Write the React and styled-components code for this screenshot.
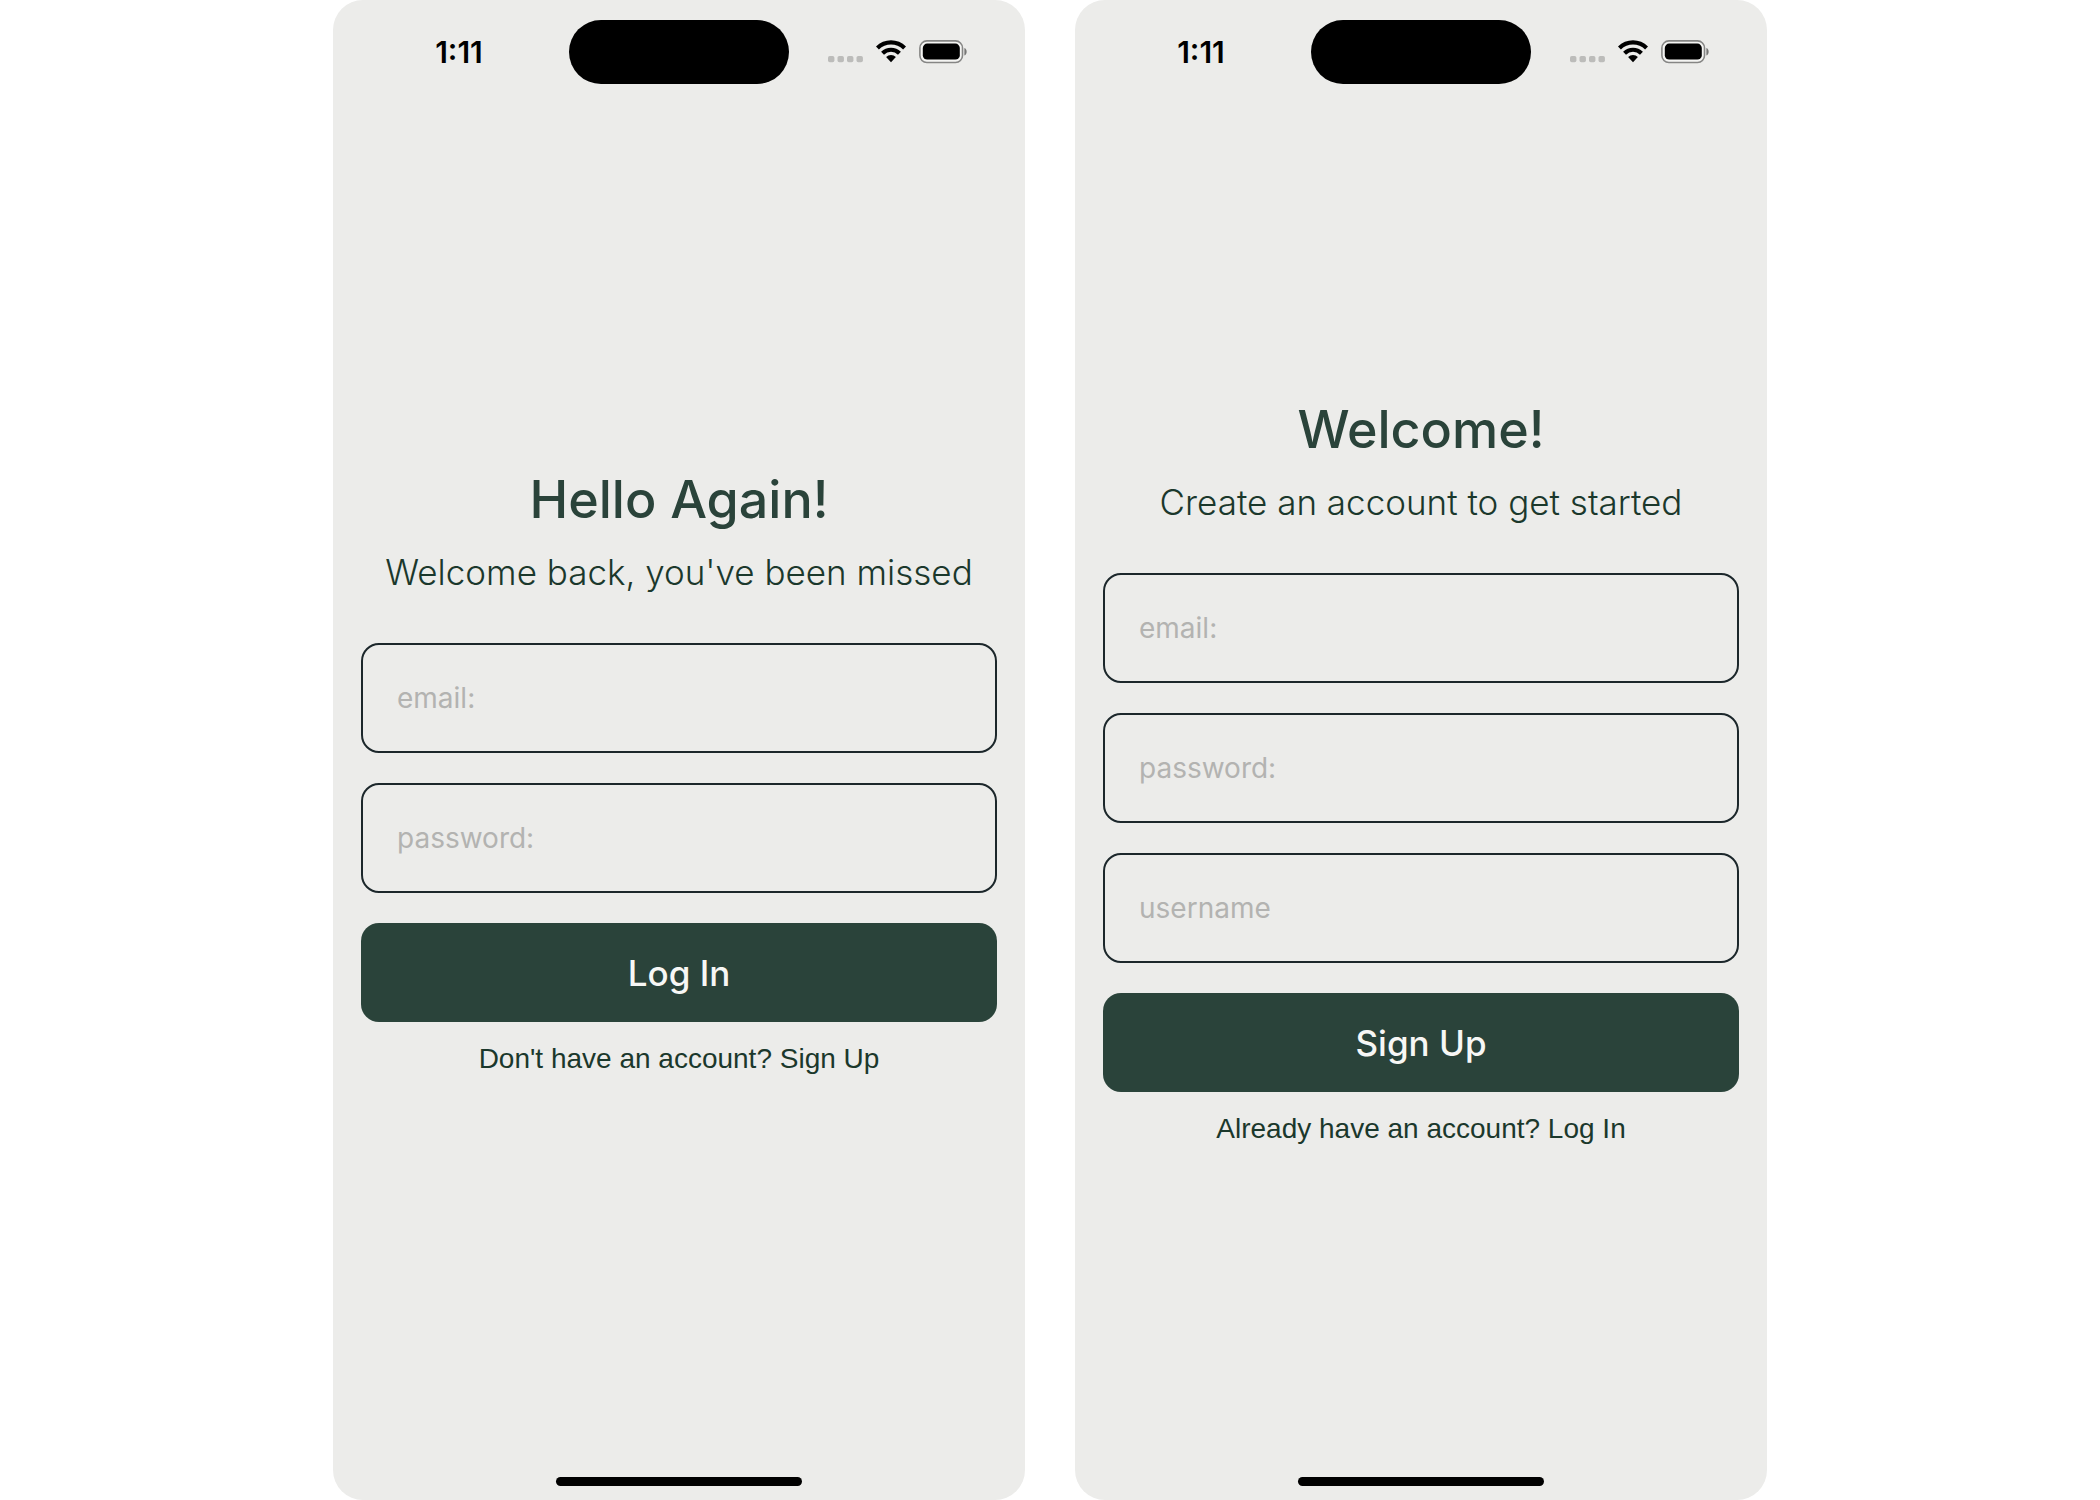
import React from "react";
import styled, { createGlobalStyle } from "styled-components";

const colors = {
  page: "#ffffff",
  screen: "#ececea",
  green: "#2a433a",
  ink: "#1b382c",
  border: "#1c272b",
  placeholder: "#b3b3b1",
  muted: "#bcbcba",
};

const GlobalStyle = createGlobalStyle`
  *, *::before, *::after { box-sizing: border-box; }
  body {
    margin: 0;
    background: ${colors.page};
    font-family: Inter, "Liberation Sans", sans-serif;
  }
`;

const Gallery = styled.div`
  display: flex;
  justify-content: center;
  gap: 50px;
  min-height: 100vh;
`;

const Phone = styled.section`
  flex: 0 1 692px;
  display: flex;
  flex-direction: column;
  background: ${colors.screen};
  border-radius: 30px;
`;

const StatusBar = styled.header`
  display: grid;
  grid-template-columns: 1fr 220px 1fr;
  align-items: center;
  padding: 20px 0;
`;

const Time = styled.time`
  padding-left: 16px;
  text-align: center;
  font-size: 30px;
  line-height: 36px;
  font-weight: 600;
  color: #000;
`;

const Island = styled.div`
  height: 64px;
  border-radius: 32px;
  background: #000;
`;

const StatusIcons = styled.div`
  display: flex;
  justify-content: center;
  align-items: center;
  gap: 13px;
  padding-right: 18px;
`;

const Main = styled.main`
  flex: 1;
  display: flex;
  flex-direction: column;
  justify-content: center;
  padding: 0 28px;
`;

const Title = styled.h1`
  margin: 0 0 17px;
  text-align: center;
  font-size: 52px;
  line-height: 66px;
  font-weight: 500;
  color: ${colors.green};
`;

const Subtitle = styled.p`
  margin: 0 0 49px;
  text-align: center;
  font-size: 35px;
  line-height: 44px;
  font-weight: 300;
  color: ${colors.ink};
`;

const Form = styled.form`
  display: flex;
  flex-direction: column;
  gap: 30px;
`;

const Field = styled.input`
  width: 100%;
  height: 110px;
  padding: 0 34px;
  border: 2px solid ${colors.border};
  border-radius: 18px;
  background: transparent;
  font: 400 28px/36px Inter, "Liberation Sans", sans-serif;
  color: ${colors.ink};

  &::placeholder {
    color: ${colors.placeholder};
    opacity: 1;
  }
`;

const SubmitButton = styled.button`
  height: 99px;
  border: 0;
  border-radius: 18px;
  background: ${colors.green};
  color: #f7f7f5;
  font: 500 35px/44px Inter, "Liberation Sans", sans-serif;
  cursor: pointer;
`;

const SwitchLink = styled.a`
  align-self: center;
  margin-top: 20px;
  font: 400 28px/34px "Liberation Sans", Arial, sans-serif;
  color: ${colors.ink};
  text-decoration: none;
`;

const HomeArea = styled.footer`
  display: flex;
  justify-content: center;
  padding: 38px 0 14px;
`;

const HomeIndicator = styled.div`
  width: 246px;
  height: 9px;
  border-radius: 5px;
  background: #000;
`;

function SignalDots() {
  return (
    <svg width="35" height="24" viewBox="0 0 35 24" aria-hidden="true">
      {[0, 9.5, 19, 28.5].map((x) => (
        <rect key={x} x={x} y="16" width="6.4" height="6.2" rx="1.8" fill={colors.muted} />
      ))}
    </svg>
  );
}

function Wifi() {
  return (
    <svg width="30" height="24" viewBox="0 0 30 24" aria-hidden="true">
      <path d="M0 6.4a21.4 21.4 0 0 1 30 0l-2.9 3a17.2 17.2 0 0 0-24.2 0z" />
      <path d="M5.1 11.7a14.2 14.2 0 0 1 19.8 0l-2.9 3a10 10 0 0 0-14 0z" />
      <path d="M10.1 17a7 7 0 0 1 9.8 0L15 22.2z" />
    </svg>
  );
}

function Battery() {
  return (
    <svg width="49" height="24" viewBox="0 0 49 24" aria-hidden="true">
      <rect x="0.9" y="0.9" width="42.6" height="21.6" rx="7" fill="#f5f5f3" stroke="#868685" strokeWidth="1.6" />
      <rect x="3.8" y="3.6" width="37" height="16" rx="4.4" />
      <path d="M45.4 8c3 1.2 3 6.4 0 7.6z" fill="#777776" />
    </svg>
  );
}

function AuthScreen({ title, subtitle, fields, action, switchText }) {
  return (
    <Phone>
      <StatusBar>
        <Time>1:11</Time>
        <Island />
        <StatusIcons>
          <SignalDots />
          <Wifi />
          <Battery />
        </StatusIcons>
      </StatusBar>
      <Main>
        <Title>{title}</Title>
        <Subtitle>{subtitle}</Subtitle>
        <Form onSubmit={(event) => event.preventDefault()}>
          {fields.map(({ type, text }) => (
            <Field key={text} type={type} placeholder={text} aria-label={text} />
          ))}
          <SubmitButton type="submit">{action}</SubmitButton>
        </Form>
        <SwitchLink href="#">{switchText}</SwitchLink>
      </Main>
      <HomeArea>
        <HomeIndicator />
      </HomeArea>
    </Phone>
  );
}

const email = { type: "email", text: "email:" };
const password = { type: "password", text: "password:" };
const username = { type: "text", text: "username" };

export default function App() {
  return (
    <>
      <GlobalStyle />
      <Gallery>
        <AuthScreen
          title="Hello Again!"
          subtitle="Welcome back, you've been missed"
          fields={[email, password]}
          action="Log In"
          switchText="Don't have an account? Sign Up"
        />
        <AuthScreen
          title="Welcome!"
          subtitle="Create an account to get started"
          fields={[email, password, username]}
          action="Sign Up"
          switchText="Already have an account? Log In"
        />
      </Gallery>
    </>
  );
}
